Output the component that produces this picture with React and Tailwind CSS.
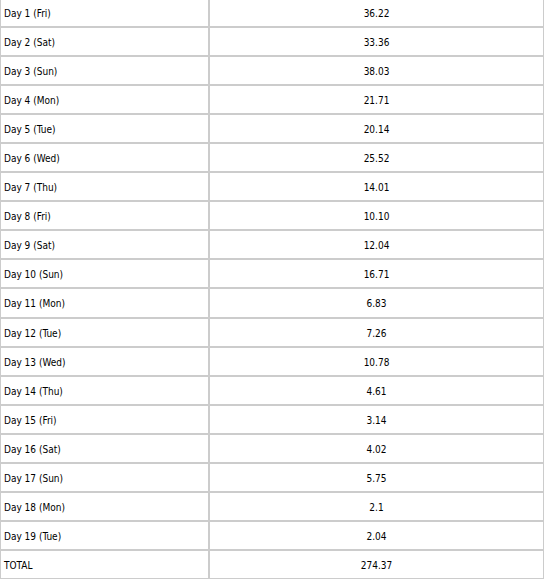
const rows = [
  ['Day 1 (Fri)', '36.22'],
  ['Day 2 (Sat)', '33.36'],
  ['Day 3 (Sun)', '38.03'],
  ['Day 4 (Mon)', '21.71'],
  ['Day 5 (Tue)', '20.14'],
  ['Day 6 (Wed)', '25.52'],
  ['Day 7 (Thu)', '14.01'],
  ['Day 8 (Fri)', '10.10'],
  ['Day 9 (Sat)', '12.04'],
  ['Day 10 (Sun)', '16.71'],
  ['Day 11 (Mon)', '6.83'],
  ['Day 12 (Tue)', '7.26'],
  ['Day 13 (Wed)', '10.78'],
  ['Day 14 (Thu)', '4.61'],
  ['Day 15 (Fri)', '3.14'],
  ['Day 16 (Sat)', '4.02'],
  ['Day 17 (Sun)', '5.75'],
  ['Day 18 (Mon)', '2.1'],
  ['Day 19 (Tue)', '2.04'],
  ['TOTAL', '274.37'],
]

const App = () => {
  return (
    <div className="w-[544px] h-[580px] overflow-hidden bg-white text-black text-[10px]"
      style={{ fontFamily: '"DejaVu Sans Condensed", "DejaVu Sans", Verdana, sans-serif' }}>
      <div className="-mt-[2px] flex flex-col">
        {rows.map(([day, value]) => (
          <div key={day} className="flex h-[29.05px]">
            {/* Day label */}
            <div className="w-[209px] border border-[#cccccc] flex items-center pl-[3px] pt-[2px]">
              {day}
            </div>
            {/* Value */}
            <div className="flex-1 border border-[#cccccc] flex items-center justify-center pt-[2px]">
              {value}
            </div>
          </div>
        ))}
      </div>
    </div>
  )
}

export default App
